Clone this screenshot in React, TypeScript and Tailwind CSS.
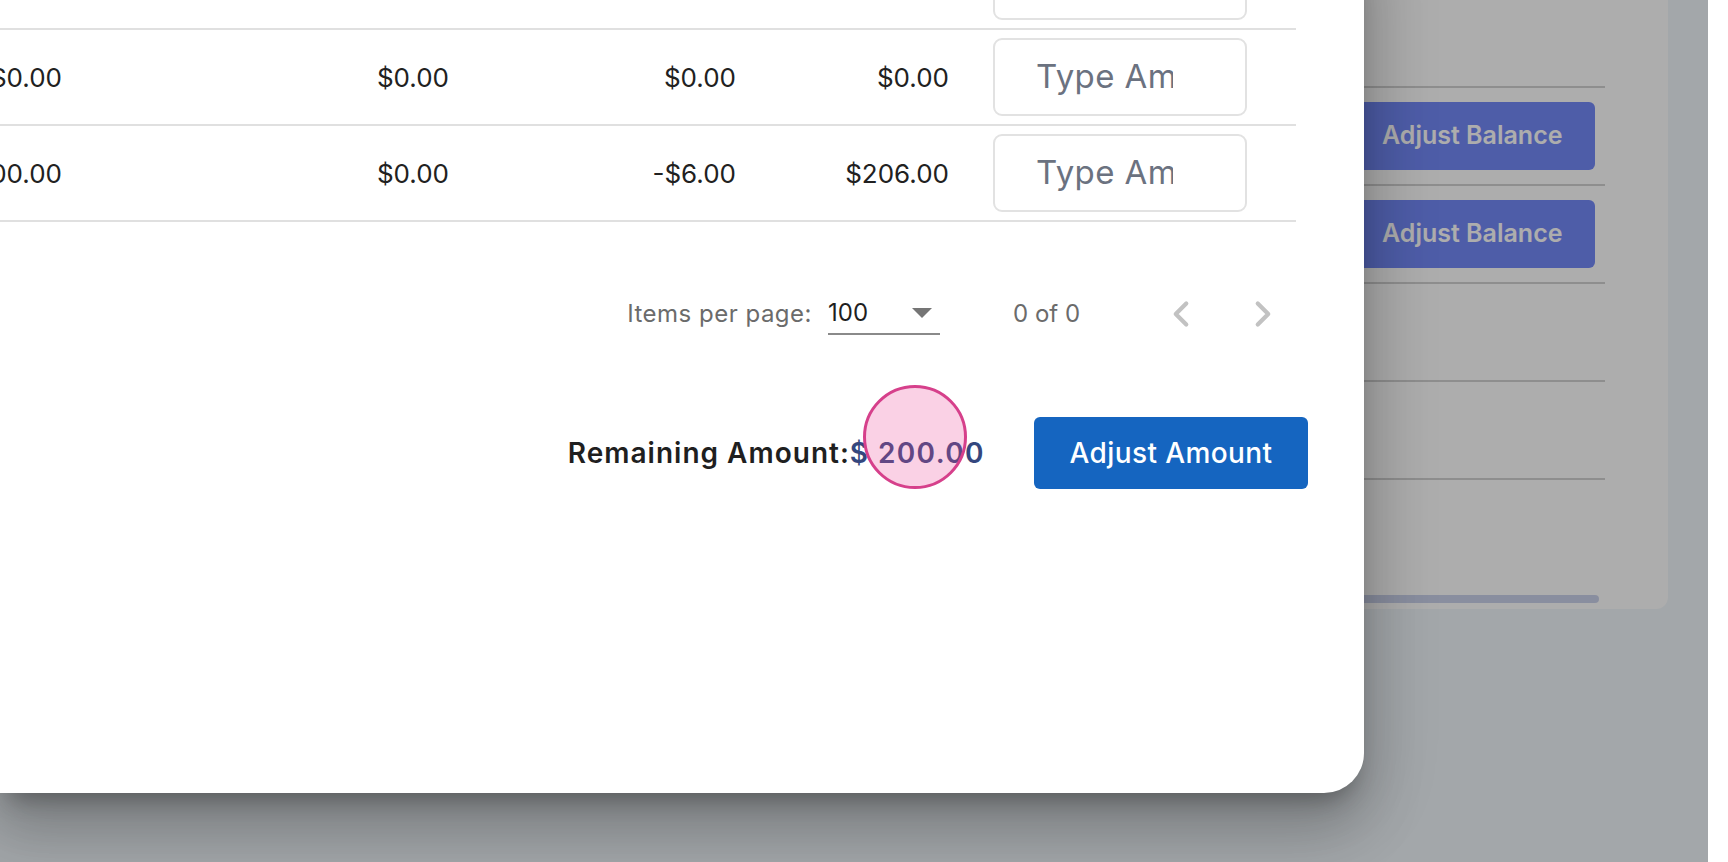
import { ChevronLeft, ChevronRight } from "lucide-react";

// first row sits above the visible area, its numbers are scrolled out of view
const rows = [
  { a: "", b: "", c: "", d: "" },
  { a: "$0.00", b: "$0.00", c: "$0.00", d: "$0.00" },
  { a: "$200.00", b: "$0.00", c: "-$6.00", d: "$206.00" },
];

function AmountRow({ a, b, c, d }: { a: string; b: string; c: string; d: string }) {
  return (
    <div className="flex h-[96px] items-center border-b-2 border-[#e0e0e0] text-[26px] text-[#212121]">
      <div className="flex w-[62px] justify-end overflow-hidden whitespace-nowrap">{a}</div>
      <div className="w-[387px] text-right">{b}</div>
      <div className="w-[287px] text-right">{c}</div>
      <div className="w-[213px] text-right">{d}</div>
      <div className="ml-[44px] flex h-[78px] w-[254px] items-center rounded-[9px] border-2 border-[#e2e2e2]">
        <input
          placeholder="Type Amount"
          className="ml-[41px] w-[137px] bg-transparent text-[33px] tracking-[0.4px] text-[#212121] outline-none placeholder:text-[#6b7280]"
        />
      </div>
    </div>
  );
}

function BackgroundRow({ button }: { button?: boolean }) {
  return (
    <div className="flex h-[98px] items-center justify-end border-b-2 border-[#d2d2d2]">
      {button ? (
        <button className="mr-[10px] h-[68px] w-[246px] rounded-[6px] bg-[#7489f8] pl-[33px] text-left text-[25px] font-semibold text-white">
          Adjust Balance
        </button>
      ) : null}
    </div>
  );
}

export default function App() {
  return (
    <div className="relative h-[862px] w-[1728px] overflow-hidden bg-white font-['Inter',sans-serif]">
      {/* page behind the dialog */}
      <div className="flex h-full w-[1708px] justify-end bg-[#f1f7fb] pr-[40px]">
        <div className="mt-[-10px] flex h-[619px] w-[620px] flex-col rounded-b-[12px] bg-white pr-[63px]">
          <BackgroundRow />
          <BackgroundRow button />
          <BackgroundRow button />
          <BackgroundRow />
          <BackgroundRow />
          <div className="mr-[6px] mt-[115px] h-[8px] rounded-full bg-[#cbd2eb]" />
        </div>
      </div>

      {/* backdrop */}
      <div className="absolute inset-y-0 left-0 w-[1708px] bg-[rgba(0,0,0,0.32)]" />

      {/* dialog */}
      <div className="absolute left-0 top-[-66px] h-[859px] w-[1364px] rounded-br-[40px] bg-white shadow-[0_16px_22px_-10px_rgba(0,0,0,0.28),0_36px_57px_5px_rgba(0,0,0,0.16),0_14px_69px_12px_rgba(0,0,0,0.13)]">
        <div className="w-[1296px]">
          {rows.map((row, i) => (
            <AmountRow key={i} {...row} />
          ))}
        </div>

        <div className="mt-[50px] flex h-[84px] w-[1296px] items-center justify-end text-[24px] text-[#6b6b6b]">
          <span className="tracking-[0.5px]">Items per page:</span>
          <div className="ml-[16px] flex h-[42px] w-[112px] items-center border-b-2 border-[#8a8a8a] pr-[8px]">
            <span className="flex-1 text-[#1f1f1f]">100</span>
            <span className="h-0 w-0 border-x-[10px] border-t-[10px] border-x-transparent border-t-[#757575]" />
          </div>
          <span className="ml-[73px] w-[65px] whitespace-nowrap">0 of 0</span>
          <button className="ml-[73px] flex h-[60px] w-[60px] items-center justify-center text-[#c2c2c2]">
            <ChevronLeft size={42} strokeWidth={2.4} />
          </button>
          <button className="ml-[22px] mr-[3px] flex h-[60px] w-[60px] items-center justify-center text-[#c2c2c2]">
            <ChevronRight size={42} strokeWidth={2.4} />
          </button>
        </div>

        <div className="mt-[61px] flex h-[72px] items-center justify-end pr-[56px]">
          <span className="text-[28px] font-semibold tracking-[1px] text-[#1f1f1f]">Remaining Amount:</span>
          <span className="text-[28px] font-semibold tracking-[1.4px] text-[#34477e]">$ 200.00</span>
          <button className="ml-[49px] h-[72px] w-[274px] rounded-[6px] bg-[#1565c0] text-[28px] font-medium tracking-[0.4px] text-white">
            Adjust Amount
          </button>
        </div>
      </div>

      {/* click marker */}
      <div className="absolute left-[863px] top-[385px] h-[104px] w-[104px] rounded-full border-[3px] border-[#d6408b] bg-[rgba(236,72,153,0.25)]" />
    </div>
  );
}
